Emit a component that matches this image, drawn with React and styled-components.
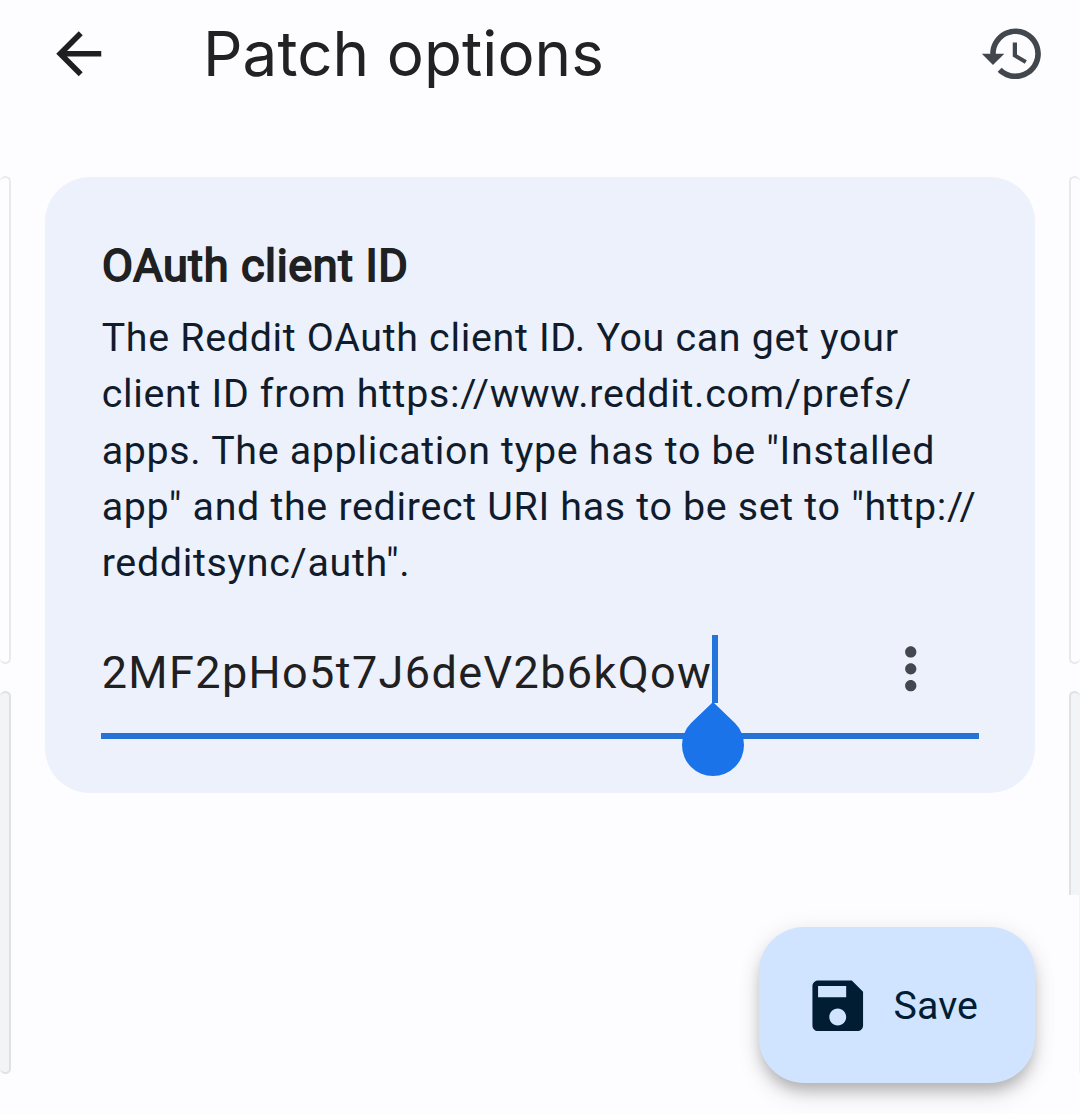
import React from "react";
import styled, { createGlobalStyle } from "styled-components";

const GlobalStyle = createGlobalStyle`
  *, *::before, *::after { box-sizing: border-box; }
  body { margin: 0; background: #fdfdff; overflow: hidden; }
`;

const Screen = styled.div`
  position: relative;
  width: 1080px;
  height: 1114px;
  overflow: hidden;
  background: #fdfdff;
  color: #1f2022;
  font-family: Roboto, "Liberation Sans", sans-serif;
`;

const TopBar = styled.header`
  display: flex;
  align-items: center;
  height: 107px;
  padding: 0 34px 0 45px;
`;

const IconButton = styled.button`
  display: flex;
  flex: none;
  padding: 0;
  border: 0;
  background: none;
  color: ${(p) => p.$color};
`;

const Icon = styled.svg`
  display: block;
  flex: none;
  width: 67.5px;
  height: 67.5px;
  fill: currentColor;
`;

const Title = styled.h1`
  flex: 1;
  margin: 0 0 0 90.5px;
  color: #222223;
  font: 400 61.875px/78px Inter, "Liberation Sans", sans-serif;
  letter-spacing: 0.1px;
  white-space: nowrap;
`;

const Content = styled.main`
  display: flex;
  justify-content: space-between;
  align-items: flex-start;
  padding-top: 69px;
`;

const Peek = styled.div`
  display: flex;
  flex-direction: column;
  align-items: ${(p) => (p.$side === "left" ? "flex-start" : "flex-end")};
  width: 11px;
`;

const PeekCard = styled.div`
  width: 11px;
  height: ${(p) => p.$height}px;
  margin-bottom: ${(p) => p.$gap || 0}px;
  border: 2px solid ${(p) => (p.$filled ? "#e0e1e3" : "#e9e9ec")};
  border-radius: ${(p) => (p.$cut ? "6px 6px 0 0" : "6px")};
  background: ${(p) => (p.$filled ? "#f3f4f6" : "#fdfdff")};
  ${(p) => (p.$side === "left" ? "border-left-width: 0;" : "border-right-width: 0;")}
  ${(p) => p.$cut && "border-bottom: 0;"}
`;

const PeekLine = styled.div`
  width: 1px;
  height: 178px;
  background: #f3f3f5;
`;

const Card = styled.section`
  width: 990px;
  height: 616px;
  margin-top: 1px;
  padding: 61px 56px 0 56px;
  border-radius: 45px;
  background: #edf1fc;
`;

const OptionName = styled.h2`
  margin: 0;
  padding-left: 1px;
  font-size: 45px;
  font-weight: 400;
  line-height: 56px;
  letter-spacing: 0.64px;
  -webkit-text-stroke: 1.8px currentColor;
  white-space: nowrap;
`;

const Description = styled.p`
  margin: 16px 0 0;
  padding-left: 0.7px;
  color: #101c2b;
  font-size: 39.375px;
  line-height: 56.25px;
  letter-spacing: 0.69px;
  white-space: nowrap;
`;

const Field = styled.div`
  display: flex;
  align-items: center;
  justify-content: space-between;
  height: 108px;
  margin-top: 40px;
  padding: 0 34.5px 27px 0;
  border-bottom: 6px solid #2573d5;
`;

const Value = styled.span`
  position: relative;
  margin-top: 8px;
  padding-left: 0.7px;
  font-size: 45px;
  line-height: 68px;
  letter-spacing: 1.38px;
  white-space: nowrap;
`;

const Caret = styled.span`
  position: absolute;
  top: -4px;
  left: 611px;
  width: 6px;
  height: 68px;
  background: #2374db;
`;

const CaretHandle = styled.svg`
  position: absolute;
  top: 62px;
  left: 580.5px;
  width: 62px;
  height: 76px;
  fill: #1a73e8;
`;

const SaveButton = styled.button`
  position: absolute;
  top: 927px;
  left: 759px;
  display: flex;
  align-items: center;
  gap: 22.5px;
  width: 276px;
  height: 156px;
  padding: 1px 0 0 44.5px;
  border: 0;
  border-radius: 45px;
  background: #d0e4ff;
  color: #001d34;
  font: 400 39.375px/56px Roboto, "Liberation Sans", sans-serif;
  letter-spacing: 0.1px;
  box-shadow: 0 10px 14px -3px rgba(0, 0, 0, 0.2), 0 14px 24px rgba(0, 0, 0, 0.09), 0 2px 24px rgba(0, 0, 0, 0.07);
`;

const SaveLabel = styled.span`
  padding-top: 1px;
`;

const lines = [
  "The Reddit OAuth client ID. You can get your",
  "client ID from https://www.reddit.com/prefs/",
  'apps. The application type has to be "Installed',
  'app" and the redirect URI has to be set to "http://',
  'redditsync/auth".',
];

export default function App() {
  return (
    <Screen>
      <GlobalStyle />
      <TopBar>
        <IconButton $color="#1f1f22" aria-label="Back">
          <Icon viewBox="0 0 24 24">
            <path d="M20 11H7.83l5.59-5.59L12 4l-8 8 8 8 1.41-1.41L7.83 13H20v-2z" />
          </Icon>
        </IconButton>
        <Title>Patch options</Title>
        <IconButton $color="#42474e" aria-label="History">
          <Icon viewBox="0 0 24 24">
            <path d="M13 3c-4.97 0-9 4.03-9 9H1l3.89 3.89.07.14L9 12H6c0-3.87 3.13-7 7-7s7 3.13 7 7-3.13 7-7 7c-1.93 0-3.68-.79-4.94-2.06l-1.42 1.42C8.27 19.99 10.51 21 13 21c4.97 0 9-4.03 9-9s-4.03-9-9-9zm-1 5v5l4.28 2.54.72-1.21-3.5-2.08V8H12z" />
          </Icon>
        </IconButton>
      </TopBar>
      <Content>
        <Peek $side="left">
          <PeekCard $side="left" $height={488} $gap={27} />
          <PeekCard $side="left" $height={383} $filled />
        </Peek>
        <Card>
          <OptionName>OAuth client ID</OptionName>
          <Description>
            {lines.map((line) => (
              <React.Fragment key={line}>
                {line}
                <br />
              </React.Fragment>
            ))}
          </Description>
          <Field>
            <Value>
              2MF2pHo5t7J6deV2b6kQow
              <Caret />
              <CaretHandle viewBox="0 0 62 76">
                <path d="M31 1 52.9 22.1A31 31 0 1 1 9.1 22.1Z" />
              </CaretHandle>
            </Value>
            <IconButton $color="#44474e" aria-label="More">
              <Icon viewBox="0 0 24 24">
                <path d="M12 8c1.1 0 2-.9 2-2s-.9-2-2-2-2 .9-2 2 .9 2 2 2zm0 2c-1.1 0-2 .9-2 2s.9 2 2 2 2-.9 2-2-.9-2-2-2zm0 6c-1.1 0-2 .9-2 2s.9 2 2 2 2-.9 2-2-.9-2-2-2z" />
              </Icon>
            </IconButton>
          </Field>
        </Card>
        <Peek $side="right">
          <PeekCard $side="right" $height={488} $gap={27} />
          <PeekCard $side="right" $height={204} $filled $cut />
          <PeekLine />
        </Peek>
      </Content>
      <SaveButton>
        <Icon viewBox="0 0 24 24">
          <path d="M17 3H5c-1.11 0-2 .9-2 2v14c0 1.1.89 2 2 2h14c1.1 0 2-.9 2-2V7l-4-4zm-5 16c-1.66 0-3-1.34-3-3s1.34-3 3-3 3 1.34 3 3-1.34 3-3 3zm3-10H5V5h10v4z" />
        </Icon>
        <SaveLabel>Save</SaveLabel>
      </SaveButton>
    </Screen>
  );
}
